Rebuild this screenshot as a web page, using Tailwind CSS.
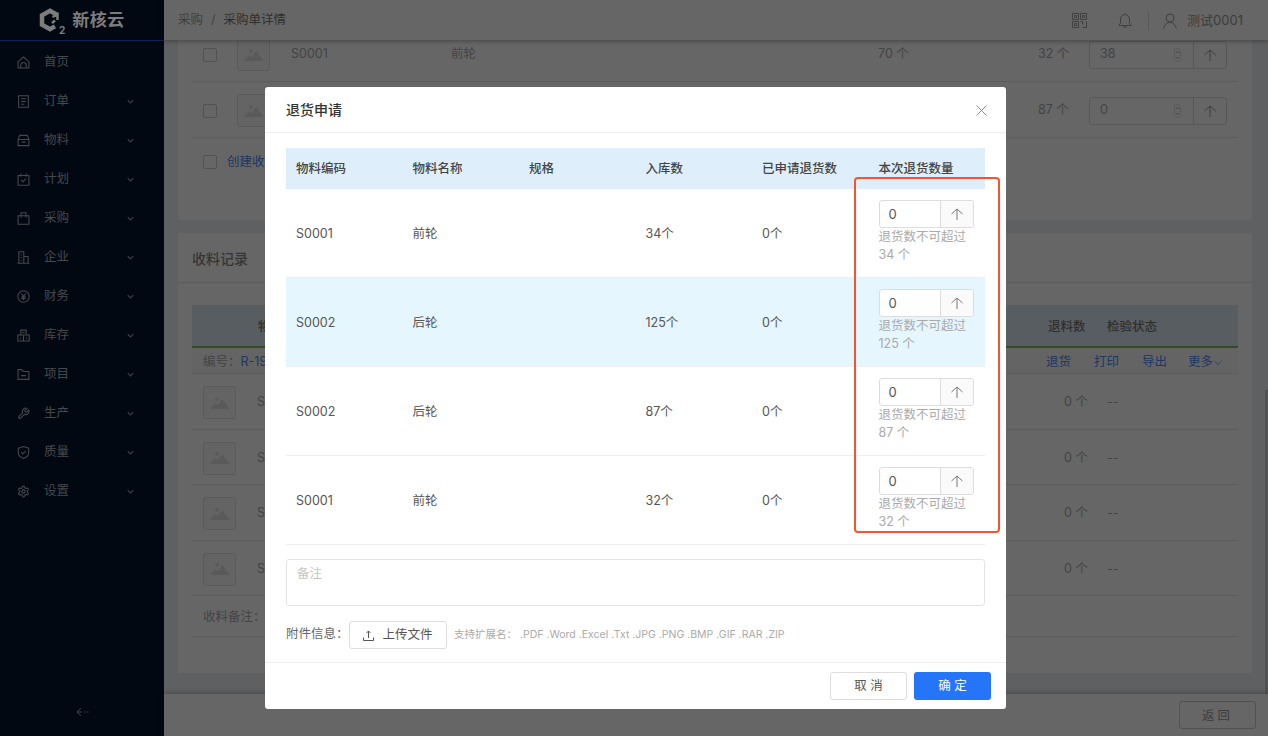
<!DOCTYPE html>
<html lang="zh-CN">
<head>
  <meta charset="UTF-8" />
  <title>采购单详情</title>
  <script src="https://cdn.jsdelivr.net/npm/@tailwindcss/browser@4"></script>
</head>
<body class="h-[736px] w-[1268px] overflow-hidden font-['Inter','Noto_Sans_CJK_SC',sans-serif] text-[12.5px]">
<div class="relative flex h-full">

  <!-- sidebar -->
  <aside class="flex w-[164px] shrink-0 flex-col bg-[#020812] text-[#45484d]">
    <div class="flex h-[41px] items-center justify-center gap-[7px] border-b border-[#0a2350] pt-[1px]">
      <span class="relative block h-[26px] w-[26px] shrink-0">
        <svg class="h-[26px] w-[26px] text-[#7c7c7c]" viewBox="0 0 26 26" fill="none" stroke="currentColor">
          <path stroke-width="4.500" d="M18.500 7 11 2.800 3 7.300v9.400l8 4.500 5-2.800"/>
          <path stroke-width="2.500" d="M13.500 9 18.500 6.500V12M16 12.500 13 15"/>
        </svg>
        <span class="absolute bottom-[-1px] right-0 text-[10px] font-bold leading-none text-[#7c7c7c]">2</span>
      </span>
      <span class="text-[17px] font-bold leading-none tracking-[0.5px] text-[#7c7c7c]">新核云</span>
    </div>
    <nav class="flex flex-col pt-[2px]">
      <a class="flex h-[39px] items-center pl-[17px]">
        <svg class="h-[13px] w-[13px]" viewBox="0 0 24 24" fill="none" stroke="currentColor" stroke-width="2"><path d="M2 10.500 12 2l10 8.500V22H2z"/><path d="M7 22v-5a5 5 0 0 1 10 0v5"/></svg>
        <span class="ml-[14px]">首页</span>
      </a>
      <a class="flex h-[39px] items-center pl-[17px]">
        <svg class="h-[13px] w-[13px]" viewBox="0 0 24 24" fill="none" stroke="currentColor" stroke-width="2"><path d="M3 1.500h18v21H3zM7.500 7h9M7.500 12h9M7.500 17h6"/></svg>
        <span class="ml-[14px] w-[83px]">订单</span>
        <svg class="h-[7px] w-[7px] text-[#3c3f44]" viewBox="0 0 10 10" fill="none" stroke="currentColor" stroke-width="1.800"><path d="m1 3 4 4 4-4"/></svg>
      </a>
      <a class="flex h-[39px] items-center pl-[17px]">
        <svg class="h-[13px] w-[13px]" viewBox="0 0 24 24" fill="none" stroke="currentColor" stroke-width="2"><path d="M2 10 5 2.500h14L22 10v11.500H2zM2 10h20M8.500 15h7"/></svg>
        <span class="ml-[14px] w-[83px]">物料</span>
        <svg class="h-[7px] w-[7px] text-[#3c3f44]" viewBox="0 0 10 10" fill="none" stroke="currentColor" stroke-width="1.800"><path d="m1 3 4 4 4-4"/></svg>
      </a>
      <a class="flex h-[39px] items-center pl-[17px]">
        <svg class="h-[13px] w-[13px]" viewBox="0 0 24 24" fill="none" stroke="currentColor" stroke-width="2"><path d="M2 4.500h20v18H2zM7 1v6M17 1v6M8 13l3 3 5.500-5.500"/></svg>
        <span class="ml-[14px] w-[83px]">计划</span>
        <svg class="h-[7px] w-[7px] text-[#3c3f44]" viewBox="0 0 10 10" fill="none" stroke="currentColor" stroke-width="1.800"><path d="m1 3 4 4 4-4"/></svg>
      </a>
      <a class="flex h-[39px] items-center pl-[17px]">
        <svg class="h-[13px] w-[13px]" viewBox="0 0 24 24" fill="none" stroke="currentColor" stroke-width="2"><path d="M2 7h20v15.500H2zM7.500 10V1.500h9V10"/></svg>
        <span class="ml-[14px] w-[83px]">采购</span>
        <svg class="h-[7px] w-[7px] text-[#3c3f44]" viewBox="0 0 10 10" fill="none" stroke="currentColor" stroke-width="1.800"><path d="m1 3 4 4 4-4"/></svg>
      </a>
      <a class="flex h-[39px] items-center pl-[17px]">
        <svg class="h-[13px] w-[13px]" viewBox="0 0 24 24" fill="none" stroke="currentColor" stroke-width="2"><path d="M1 22.500h22M3.500 22V1.500h9V22M12.500 10h8v12M7 7h2M7 12h2M7 17h2"/></svg>
        <span class="ml-[14px] w-[83px]">企业</span>
        <svg class="h-[7px] w-[7px] text-[#3c3f44]" viewBox="0 0 10 10" fill="none" stroke="currentColor" stroke-width="1.800"><path d="m1 3 4 4 4-4"/></svg>
      </a>
      <a class="flex h-[39px] items-center pl-[17px]">
        <svg class="h-[13px] w-[13px]" viewBox="0 0 24 24" fill="none" stroke="currentColor" stroke-width="2"><circle cx="12" cy="12" r="10.500"/><path d="m8 6.500 4 5.500 4-5.500M12 12v6.500M8 12.500h8M8 15.500h8"/></svg>
        <span class="ml-[14px] w-[83px]">财务</span>
        <svg class="h-[7px] w-[7px] text-[#3c3f44]" viewBox="0 0 10 10" fill="none" stroke="currentColor" stroke-width="1.800"><path d="m1 3 4 4 4-4"/></svg>
      </a>
      <a class="flex h-[39px] items-center pl-[17px]">
        <svg class="h-[13px] w-[13px]" viewBox="0 0 24 24" fill="none" stroke="currentColor" stroke-width="2"><path d="M7 2h10v9H7zM1.500 11h10.500v11H1.500zM12 11h10.500v11H12zM10 6.500h4M5 17h3M16 17h3"/></svg>
        <span class="ml-[14px] w-[83px]">库存</span>
        <svg class="h-[7px] w-[7px] text-[#3c3f44]" viewBox="0 0 10 10" fill="none" stroke="currentColor" stroke-width="1.800"><path d="m1 3 4 4 4-4"/></svg>
      </a>
      <a class="flex h-[39px] items-center pl-[17px]">
        <svg class="h-[13px] w-[13px]" viewBox="0 0 24 24" fill="none" stroke="currentColor" stroke-width="2"><path d="M2 3h7l3 3.500h10V21H2zM7.500 14h9"/></svg>
        <span class="ml-[14px] w-[83px]">项目</span>
        <svg class="h-[7px] w-[7px] text-[#3c3f44]" viewBox="0 0 10 10" fill="none" stroke="currentColor" stroke-width="1.800"><path d="m1 3 4 4 4-4"/></svg>
      </a>
      <a class="flex h-[39px] items-center pl-[17px]">
        <svg class="h-[13px] w-[13px]" viewBox="0 0 24 24" fill="none" stroke="currentColor" stroke-width="2"><path d="M14.700 6.300a1 1 0 0 0 0 1.400l1.600 1.600a1 1 0 0 0 1.400 0l3.770-3.770a6 6 0 0 1-7.940 7.940l-6.910 6.910a2.120 2.120 0 0 1-3-3l6.910-6.910a6 6 0 0 1 7.940-7.940l-3.760 3.760z"/></svg>
        <span class="ml-[14px] w-[83px]">生产</span>
        <svg class="h-[7px] w-[7px] text-[#3c3f44]" viewBox="0 0 10 10" fill="none" stroke="currentColor" stroke-width="1.800"><path d="m1 3 4 4 4-4"/></svg>
      </a>
      <a class="flex h-[39px] items-center pl-[17px]">
        <svg class="h-[13px] w-[13px]" viewBox="0 0 24 24" fill="none" stroke="currentColor" stroke-width="2"><path d="M2.500 4 12 1l9.500 3v9c0 5-4 8-9.500 10C6.500 21 2.500 18 2.500 13zM8 11.500l3 3 5-5"/></svg>
        <span class="ml-[14px] w-[83px]">质量</span>
        <svg class="h-[7px] w-[7px] text-[#3c3f44]" viewBox="0 0 10 10" fill="none" stroke="currentColor" stroke-width="1.800"><path d="m1 3 4 4 4-4"/></svg>
      </a>
      <a class="flex h-[39px] items-center pl-[17px]">
        <svg class="h-[13px] w-[13px]" viewBox="0 0 24 24" fill="none" stroke="currentColor" stroke-width="2"><path d="M12.220 2h-.44a2 2 0 0 0-2 2v.18a2 2 0 0 1-1 1.730l-.43.25a2 2 0 0 1-2 0l-.15-.08a2 2 0 0 0-2.730.73l-.22.38a2 2 0 0 0 .73 2.730l.15.1a2 2 0 0 1 1 1.720v.51a2 2 0 0 1-1 1.740l-.15.09a2 2 0 0 0-.73 2.730l.22.38a2 2 0 0 0 2.730.73l.15-.08a2 2 0 0 1 2 0l.43.25a2 2 0 0 1 1 1.730V20a2 2 0 0 0 2 2h.44a2 2 0 0 0 2-2v-.18a2 2 0 0 1 1-1.730l.43-.25a2 2 0 0 1 2 0l.15.08a2 2 0 0 0 2.730-.73l.22-.39a2 2 0 0 0-.73-2.730l-.15-.08a2 2 0 0 1-1-1.740v-.5a2 2 0 0 1 1-1.740l.15-.09a2 2 0 0 0 .73-2.730l-.22-.38a2 2 0 0 0-2.730-.73l-.15.08a2 2 0 0 1-2 0l-.43-.25a2 2 0 0 1-1-1.730V4a2 2 0 0 0-2-2z"/><circle cx="12" cy="12" r="3"/></svg>
        <span class="ml-[14px] w-[83px]">设置</span>
        <svg class="h-[7px] w-[7px] text-[#3c3f44]" viewBox="0 0 10 10" fill="none" stroke="currentColor" stroke-width="1.800"><path d="m1 3 4 4 4-4"/></svg>
      </a>
    </nav>
    <div class="mt-auto flex h-[29px] items-start justify-center">
      <svg class="h-[10px] w-[13px] text-[#3c3f44]" viewBox="0 0 13 10" fill="none" stroke="currentColor"><path d="M5 1 1 5l4 4M1 5h5M8 5h1.500M11 5h1.500"/></svg>
    </div>
  </aside>

  <!-- page behind the dialog -->
  <main class="relative flex min-w-0 flex-1 flex-col bg-[#edf0f3]">
    <header class="z-10 flex h-[40px] shrink-0 items-center bg-white pl-[14px] pr-[25px] pt-[1px] shadow-[0_1px_5px_rgba(0,0,0,0.35)]">
      <span class="text-[#a0a0a0]">采购</span>
      <span class="mx-[8px] text-[#a0a0a0]">/</span>
      <span class="text-[#777]">采购单详情</span>
      <svg class="ml-auto h-[15px] w-[15px] text-[#a0a0a0]" viewBox="0 0 15 15" fill="none" stroke="currentColor"><path d="M.5.500h6v6h-6zM8.500.500h6v6h-6zM.5 8.500h6v6h-6zM8.500 8.500h2v3M14.500 8.500v6h-4M2.500 2.500h2v2h-2zM10.500 2.500h2v2h-2zM2.500 10.500h2v2h-2z"/></svg>
      <svg class="ml-[31px] h-[15px] w-[14px] text-[#a0a0a0]" viewBox="0 0 14 15" fill="none" stroke="currentColor"><path d="M1 12.500h12L11.500 10V6a4.500 4.500 0 0 0-9 0v4zM7 .5v1M5.500 13a1.500 1.500 0 0 0 3 0"/></svg>
      <span class="ml-[16px] h-[20px] w-px bg-[#ddd]"></span>
      <svg class="ml-[14px] h-[16px] w-[14px] text-[#a0a0a0]" viewBox="0 0 14 16" fill="none" stroke="currentColor"><circle cx="7" cy="5" r="4"/><path d="M.7 15.500C1.500 11.500 4 9.500 7 9.500s5.500 2 6.300 6"/></svg>
      <span class="ml-[10px] text-[13px] text-[#999]">测试0001</span>
    </header>

    <div class="min-h-0 flex-1 overflow-hidden pl-[14px] pr-[16px]">
      <div class="-mt-[14px] flex flex-col gap-[13px]">
        <!-- purchase items card -->
        <section class="flex h-[194px] flex-col bg-white px-[14px] text-[#aaa]">
          <div class="flex h-[56px] shrink-0 items-center border-b border-[#e6e6e6] pl-[11px] pt-[2px]">
            <span class="h-[14px] w-[14px] rounded-[2px] border border-[#ccc]"></span>
            <span class="ml-[20px] flex h-[33px] w-[33px] items-center justify-center rounded-[3px] border border-[#e0e0e0] bg-[#fafafa]">
              <svg class="h-[12px] w-[20px] text-[#e2e2e2]" viewBox="0 0 20 12" fill="currentColor"><circle cx="7" cy="2" r="2"/><path d="m0 12 5-6 3 2 4-6 8 10z"/></svg>
            </span>
            <span class="ml-[21px] w-[160px]">S0001</span>
            <span class="w-[427px]">前轮</span>
            <span class="w-[160px]">70 个</span>
            <span class="w-[51px]">32 个</span>
            <span class="flex h-[28px] w-[138px] rounded-[3px] border border-[#ddd]">
              <span class="flex w-[104px] items-center justify-between border-r border-[#ddd] pl-[10px] pr-[12px]">38
                <svg class="h-[14px] w-[7px] text-[#aaa]" viewBox="0 0 7 14" fill="none" stroke="currentColor"><rect x=".5" y=".5" width="6" height="13" rx="3" stroke="#ddd"/><path d="m2 5 1.500-1.500L5 5M2 9l1.500 1.500L5 9"/></svg>
              </span>
              <span class="flex flex-1 items-center justify-center">
                <svg class="h-[12px] w-[12px] text-[#999]" viewBox="0 0 12 12" fill="none" stroke="currentColor"><path d="M6 12V1M.5 6 6 1l5.500 5"/></svg>
              </span>
            </span>
          </div>
          <div class="flex h-[56px] shrink-0 items-center border-b border-[#e6e6e6] pl-[11px] pt-[2px]">
            <span class="h-[14px] w-[14px] rounded-[2px] border border-[#ccc]"></span>
            <span class="ml-[20px] flex h-[33px] w-[33px] items-center justify-center rounded-[3px] border border-[#e0e0e0] bg-[#fafafa]">
              <svg class="h-[12px] w-[20px] text-[#e2e2e2]" viewBox="0 0 20 12" fill="currentColor"><circle cx="7" cy="2" r="2"/><path d="m0 12 5-6 3 2 4-6 8 10z"/></svg>
            </span>
            <span class="ml-[21px] w-[160px]">S0001</span>
            <span class="w-[427px]">前轮</span>
            <span class="w-[160px]">70 个</span>
            <span class="w-[51px]">87 个</span>
            <span class="flex h-[28px] w-[138px] rounded-[3px] border border-[#ddd]">
              <span class="flex w-[104px] items-center justify-between border-r border-[#ddd] pl-[10px] pr-[12px]">0
                <svg class="h-[14px] w-[7px] text-[#aaa]" viewBox="0 0 7 14" fill="none" stroke="currentColor"><rect x=".5" y=".5" width="6" height="13" rx="3" stroke="#ddd"/><path d="m2 5 1.500-1.500L5 5M2 9l1.500 1.500L5 9"/></svg>
              </span>
              <span class="flex flex-1 items-center justify-center">
                <svg class="h-[12px] w-[12px] text-[#999]" viewBox="0 0 12 12" fill="none" stroke="currentColor"><path d="M6 12V1M.5 6 6 1l5.500 5"/></svg>
              </span>
            </span>
          </div>
          <div class="flex h-[48px] shrink-0 items-center pl-[11px]">
            <span class="h-[14px] w-[14px] rounded-[2px] border border-[#ccc]"></span>
            <span class="ml-[10px] text-[#4a8cf5]">创建收料单</span>
          </div>
        </section>

        <!-- receiving records card -->
        <section class="flex h-[440px] flex-col bg-white px-[14px] text-[#aaa]">
          <h2 class="-mx-[14px] flex h-[50px] shrink-0 items-center border-b border-[#e6e6e6] pl-[14px] pt-[2px] text-[14px] font-medium text-[#888]">收料记录</h2>
          <div class="mt-[22px] flex h-[43px] shrink-0 items-center border-b-2 border-[#7fc05a] bg-[#dde8f6] pl-[66px] pt-[3px] font-medium text-[#777]">
            <span class="w-[790px]">物料</span>
            <span class="w-[59px]">退料数</span>
            <span>检验状态</span>
          </div>
          <div class="flex h-[26px] shrink-0 items-center border-b border-[#e6e6e6] bg-[#fafafa] pl-[11px] pt-[4px]">
            <span>编号：</span>
            <span class="text-[#4a8cf5]">R-19</span>
            <span class="ml-auto flex pr-[16px] text-[#4a8cf5]">
              <span class="w-[48px]">退货</span>
              <span class="w-[48px]">打印</span>
              <span class="w-[46px]">导出</span>
              <span class="flex items-center gap-[1px]">更多
                <svg class="h-[8px] w-[8px]" viewBox="0 0 10 10" fill="none" stroke="currentColor"><path d="m1 3 4 4 4-4"/></svg>
              </span>
            </span>
          </div>
          <div class="flex h-[56px] shrink-0 items-center border-b border-[#e6e6e6] pl-[11px] pt-[2px]">
            <span class="flex h-[33px] w-[33px] items-center justify-center rounded-[3px] border border-[#e0e0e0] bg-[#fafafa]">
              <svg class="h-[12px] w-[20px] text-[#e2e2e2]" viewBox="0 0 20 12" fill="currentColor"><circle cx="7" cy="2" r="2"/><path d="m0 12 5-6 3 2 4-6 8 10z"/></svg>
            </span>
            <span class="ml-[21px] w-[807px]">S0001</span>
            <span class="w-[43px]">0 个</span>
            <span>--</span>
          </div>
          <div class="flex h-[55px] shrink-0 items-center border-b border-[#e6e6e6] pl-[11px] pt-[2px]">
            <span class="flex h-[33px] w-[33px] items-center justify-center rounded-[3px] border border-[#e0e0e0] bg-[#fafafa]">
              <svg class="h-[12px] w-[20px] text-[#e2e2e2]" viewBox="0 0 20 12" fill="currentColor"><circle cx="7" cy="2" r="2"/><path d="m0 12 5-6 3 2 4-6 8 10z"/></svg>
            </span>
            <span class="ml-[21px] w-[807px]">S0002</span>
            <span class="w-[43px]">0 个</span>
            <span>--</span>
          </div>
          <div class="flex h-[56px] shrink-0 items-center border-b border-[#e6e6e6] pl-[11px] pt-[2px]">
            <span class="flex h-[33px] w-[33px] items-center justify-center rounded-[3px] border border-[#e0e0e0] bg-[#fafafa]">
              <svg class="h-[12px] w-[20px] text-[#e2e2e2]" viewBox="0 0 20 12" fill="currentColor"><circle cx="7" cy="2" r="2"/><path d="m0 12 5-6 3 2 4-6 8 10z"/></svg>
            </span>
            <span class="ml-[21px] w-[807px]">S0002</span>
            <span class="w-[43px]">0 个</span>
            <span>--</span>
          </div>
          <div class="flex h-[55px] shrink-0 items-center border-b border-[#e6e6e6] pl-[11px] pt-[2px]">
            <span class="flex h-[33px] w-[33px] items-center justify-center rounded-[3px] border border-[#e0e0e0] bg-[#fafafa]">
              <svg class="h-[12px] w-[20px] text-[#e2e2e2]" viewBox="0 0 20 12" fill="currentColor"><circle cx="7" cy="2" r="2"/><path d="m0 12 5-6 3 2 4-6 8 10z"/></svg>
            </span>
            <span class="ml-[21px] w-[807px]">S0001</span>
            <span class="w-[43px]">0 个</span>
            <span>--</span>
          </div>
          <div class="flex h-[41px] shrink-0 items-center border-b border-[#e6e6e6] pl-[11px] pt-[2px]">收料备注：</div>
        </section>
      </div>
    </div>

    <footer class="z-10 flex h-[42px] shrink-0 items-center justify-end bg-white pr-[12px] shadow-[0_-1px_5px_rgba(0,0,0,0.25)]">
      <span class="flex h-[28px] w-[77px] items-center justify-center rounded-[3px] border border-[#ccc] pt-[2px] tracking-[3px] text-[#999]">返回</span>
    </footer>

    <!-- scrollbar thumb -->
    <span class="absolute right-0 top-[390px] h-[304px] w-[3px] bg-[#c8ccd0]"></span>
    <!-- mask -->
    <div class="absolute inset-0 z-20 bg-black/60"></div>
  </main>

  <!-- dialog -->
  <div class="absolute left-[265px] top-[87px] z-30 flex h-[622px] w-[741px] flex-col rounded-[3px] bg-white text-[#555]">
    <div class="flex h-[46px] shrink-0 items-center justify-between border-b border-[#eee] pl-[21px] pr-[19px]">
      <h1 class="text-[14px] font-medium text-[#333]">退货申请</h1>
      <svg class="mt-[2px] h-[11px] w-[11px] text-[#888]" viewBox="0 0 11 11" fill="none" stroke="currentColor"><path d="m.5.500 10 10M10.500.500l-10 10"/></svg>
    </div>

    <div class="flex min-h-0 flex-1 flex-col px-[21px] pt-[15px]">
      <div class="grid h-[41px] shrink-0 grid-cols-6 items-center bg-[#deeefb] pt-[1px] font-medium text-[#444]">
        <span class="pl-[10px]">物料编码</span>
        <span class="pl-[10px]">物料名称</span>
        <span class="pl-[10px]">规格</span>
        <span class="pl-[10px]">入库数</span>
        <span class="pl-[10px]">已申请退货数</span>
        <span class="pl-[10px]">本次退货数量</span>
      </div>

      <div class="grid h-[89px] shrink-0 grid-cols-6 items-center border-b border-[#eee] pt-[2px]">
        <span class="pl-[10px]">S0001</span>
        <span class="pl-[10px]">前轮</span>
        <span class="pl-[10px]"></span>
        <span class="pl-[10px]">34个</span>
        <span class="pl-[10px]">0个</span>
        <div class="-mt-[4px] pl-[10px]">
          <div class="flex h-[28px] w-[95px] rounded-[3px] border border-[#ddd] bg-white">
            <span class="flex w-[61px] items-center border-r border-[#ddd] pl-[9px] pt-[1px] text-[13px]">0</span>
            <span class="flex flex-1 items-center justify-center rounded-r-[3px] bg-[#fafafa]">
              <svg class="h-[12px] w-[12px] text-[#777]" viewBox="0 0 12 12" fill="none" stroke="currentColor"><path d="M6 12V1M.5 6 6 1l5.500 5"/></svg>
            </span>
          </div>
          <p class="w-[100px] leading-[18px] text-[#aaa]">退货数不可超过 34 个</p>
        </div>
      </div>
      <div class="grid h-[89px] shrink-0 grid-cols-6 items-center border-b border-[#eee] bg-[#e6f6ff] pt-[2px]">
        <span class="pl-[10px]">S0002</span>
        <span class="pl-[10px]">后轮</span>
        <span class="pl-[10px]"></span>
        <span class="pl-[10px]">125个</span>
        <span class="pl-[10px]">0个</span>
        <div class="-mt-[4px] pl-[10px]">
          <div class="flex h-[28px] w-[95px] rounded-[3px] border border-[#ddd] bg-white">
            <span class="flex w-[61px] items-center border-r border-[#ddd] pl-[9px] pt-[1px] text-[13px]">0</span>
            <span class="flex flex-1 items-center justify-center rounded-r-[3px] bg-[#fafafa]">
              <svg class="h-[12px] w-[12px] text-[#777]" viewBox="0 0 12 12" fill="none" stroke="currentColor"><path d="M6 12V1M.5 6 6 1l5.500 5"/></svg>
            </span>
          </div>
          <p class="w-[100px] leading-[18px] text-[#aaa]">退货数不可超过 125 个</p>
        </div>
      </div>
      <div class="grid h-[89px] shrink-0 grid-cols-6 items-center border-b border-[#eee] pt-[2px]">
        <span class="pl-[10px]">S0002</span>
        <span class="pl-[10px]">后轮</span>
        <span class="pl-[10px]"></span>
        <span class="pl-[10px]">87个</span>
        <span class="pl-[10px]">0个</span>
        <div class="-mt-[4px] pl-[10px]">
          <div class="flex h-[28px] w-[95px] rounded-[3px] border border-[#ddd] bg-white">
            <span class="flex w-[61px] items-center border-r border-[#ddd] pl-[9px] pt-[1px] text-[13px]">0</span>
            <span class="flex flex-1 items-center justify-center rounded-r-[3px] bg-[#fafafa]">
              <svg class="h-[12px] w-[12px] text-[#777]" viewBox="0 0 12 12" fill="none" stroke="currentColor"><path d="M6 12V1M.5 6 6 1l5.500 5"/></svg>
            </span>
          </div>
          <p class="w-[100px] leading-[18px] text-[#aaa]">退货数不可超过 87 个</p>
        </div>
      </div>
      <div class="grid h-[89px] shrink-0 grid-cols-6 items-center border-b border-[#eee] pt-[2px]">
        <span class="pl-[10px]">S0001</span>
        <span class="pl-[10px]">前轮</span>
        <span class="pl-[10px]"></span>
        <span class="pl-[10px]">32个</span>
        <span class="pl-[10px]">0个</span>
        <div class="-mt-[4px] pl-[10px]">
          <div class="flex h-[28px] w-[95px] rounded-[3px] border border-[#ddd] bg-white">
            <span class="flex w-[61px] items-center border-r border-[#ddd] pl-[9px] pt-[1px] text-[13px]">0</span>
            <span class="flex flex-1 items-center justify-center rounded-r-[3px] bg-[#fafafa]">
              <svg class="h-[12px] w-[12px] text-[#777]" viewBox="0 0 12 12" fill="none" stroke="currentColor"><path d="M6 12V1M.5 6 6 1l5.500 5"/></svg>
            </span>
          </div>
          <p class="w-[100px] leading-[18px] text-[#aaa]">退货数不可超过 32 个</p>
        </div>
      </div>

      <div class="mt-[14px] h-[47px] shrink-0 rounded-[3px] border border-[#e4e4e4] px-[10px] pt-[5px] text-[#c4c4c4]">备注</div>

      <div class="mt-[14px] flex h-[29px] shrink-0 items-center">
        <span class="w-[63px] text-[#666]">附件信息：</span>
        <span class="flex h-[28px] w-[98px] items-center justify-center gap-[8px] rounded-[3px] border border-[#ddd] pt-[1px] text-[#555]">
          <svg class="h-[11px] w-[11px]" viewBox="0 0 11 11" fill="none" stroke="currentColor"><path d="M.5 7.500v3h10v-3M5.500 8V1M3.500 3l2-2 2 2"/></svg>
          上传文件
        </span>
        <span class="ml-[7px] pt-[1px] text-[10.5px] text-[#aaa]">支持扩展名： .PDF .Word .Excel .Txt .JPG .PNG .BMP .GIF .RAR .ZIP</span>
      </div>
    </div>

    <div class="flex h-[47px] shrink-0 items-start justify-end gap-[7px] border-t border-[#eee] pr-[15px] pt-[9px]">
      <button class="h-[28px] w-[77px] rounded-[3px] border border-[#ddd] pt-[1px] text-[#555]">取 消</button>
      <button class="h-[28px] w-[77px] rounded-[3px] bg-[#2575f8] pt-[1px] text-white">确 定</button>
    </div>
  </div>

  <!-- red annotation box drawn over the screenshot -->
  <div class="absolute left-[854px] top-[177px] z-40 h-[356px] w-[146px] rounded-[4px] border-2 border-[#f4552d]"></div>
</div>
</body>
</html>
